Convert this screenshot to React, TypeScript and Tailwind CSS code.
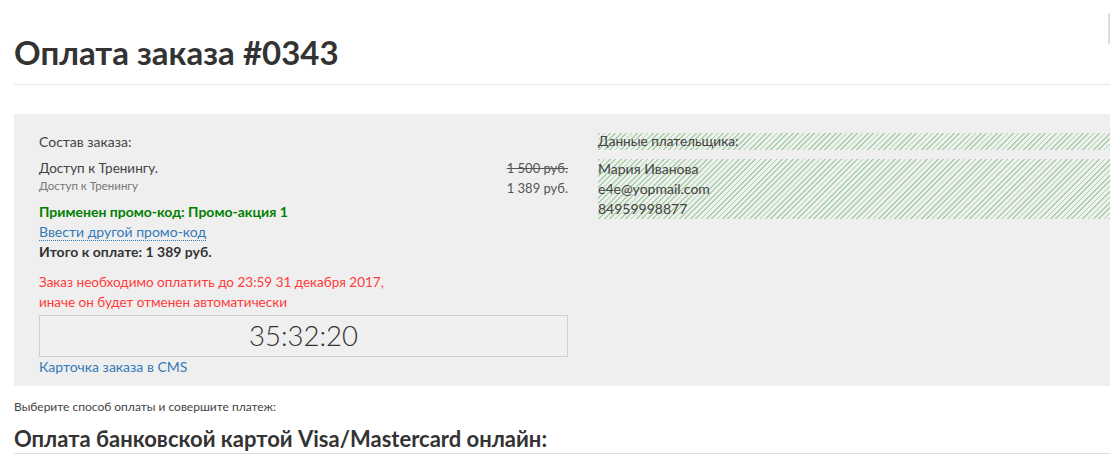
import React from "react";

const hatch =
  "bg-[repeating-linear-gradient(-45deg,transparent_0px,transparent_2.6px,#a8d2a8_2.6px,#a8d2a8_3.8px)]";

export default function App() {
  return (
    <div className="relative w-[1110px] h-[467px] overflow-hidden bg-white font-['Lato',sans-serif] text-[#333]">
      <div className="absolute left-[1108px] top-[13px] w-[2px] h-[31px] bg-[#dcdcdc]" />
      <div className="pl-[14px] w-[1130px]">
        <h1 className="pt-[30px] pb-[10px] text-[33px] leading-[44px] font-bold text-[#333] border-b border-[#e8e8e8]">
          Оплата заказа #0343
        </h1>
        <div className="mt-[29px] bg-[#efefef] h-[272px] pl-[25px] pt-[18px] flex gap-[30px] text-[14px]">
          <div className="w-[529px] shrink-0">
            <div className="leading-[20px] text-[#444]">Состав заказа:</div>
            <div className="mt-[6px] flex justify-between">
              <div>
                <div className="leading-[20px] text-[13.5px] text-[#444]">Доступ к Тренингу.</div>
                <div className="text-[11.5px] leading-[16px] text-[#777]">Доступ к Тренингу</div>
              </div>
              <div className="text-right text-[13px]">
                <div className="leading-[20px] text-[#555] line-through">1 500 руб.</div>
                <div className="leading-[20px] text-[#555]">1 389 руб.</div>
              </div>
            </div>
            <div className="mt-[4px] leading-[20px] font-bold text-[#008000]">
              Применен промо-код: Промо-акция 1
            </div>
            <div className="leading-[20px]">
              <span className="text-[#337ab7] border-b border-dotted border-[#337ab7]">
                Ввести другой промо-код
              </span>
            </div>
            <div className="leading-[20px] font-bold text-[#333]">Итого к оплате: 1 389 руб.</div>
            <div className="mt-[10px] leading-[20px] text-[13.5px] text-[#ff3a3a]">
              Заказ необходимо оплатить до 23:59 31 декабря 2017,
              <br />
              иначе он будет отменен автоматически
            </div>
            <div className="mt-[3px] h-[42px] border border-[#cfcfcf] flex items-center justify-center text-[27.5px] font-light text-[#333]">
              35:32:20
            </div>
            <div className="leading-[20px] text-[#337ab7]">Карточка заказа в CMS</div>
          </div>
          <div className="flex-1">
            <div className={`leading-[17px] mt-[1px] text-[13.6px] text-[#444] ${hatch}`}>Данные плательщика:</div>
            <div className={`mt-[9px] leading-[20px] text-[#444] ${hatch}`}>
              <div>Мария Иванова</div>
              <div>e4e@yopmail.com</div>
              <div>84959998877</div>
            </div>
          </div>
        </div>
        <div className="mt-[11px] text-[12px] leading-[20px] text-[#444]">
          Выберите способ оплаты и совершите платеж:
        </div>
        <h2 className="mt-[9px] pb-[1px] text-[22px] leading-[26px] font-bold text-[#333] border-b border-[#dddddd]">
          Оплата банковской картой Visa/Mastercard онлайн:
        </h2>
      </div>
    </div>
  );
}
